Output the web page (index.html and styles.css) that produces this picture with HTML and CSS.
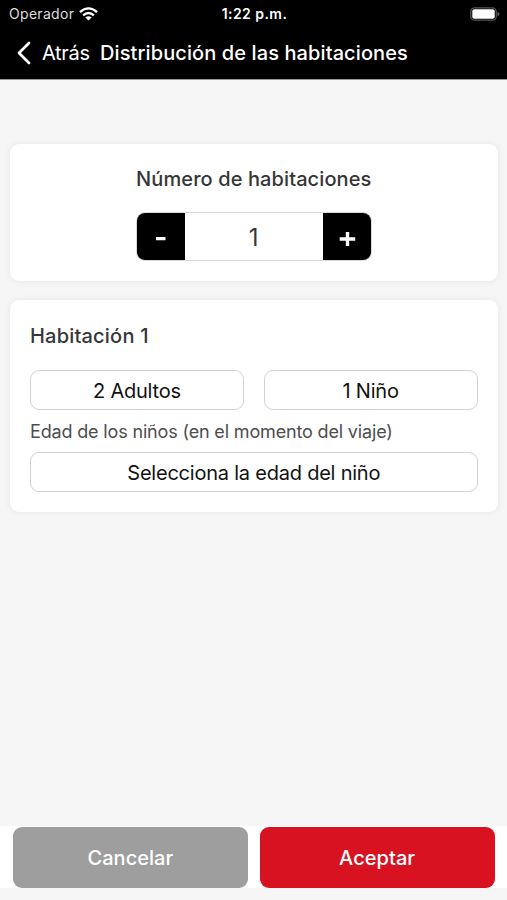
FILE: index.html
```html
<!DOCTYPE html>
<html lang="es">
<head>
<meta charset="utf-8">
<meta name="viewport" content="width=device-width">
<title>Distribución de las habitaciones</title>
<link rel="stylesheet" href="styles.css">
</head>
<body>
<header class="header">
  <div class="status">
    <div class="carrier"><span>Operador</span>
      <svg class="wifi" viewBox="0 0 18 13" width="19" height="14" fill="none" stroke="#fff" stroke-width="2.2"><path d="M.9 4.7Q9-2.4 17.1 4.7M3.9 7.7q5.1-4.3 10.2 0"/><path d="M9 12.7 6 9.8q3-2.5 6 0z" fill="#fff" stroke="none"/></svg>
    </div>
    <span class="time">1:22 p.m.</span>
    <svg class="battery" viewBox="0 0 30 14" width="30" height="14"><rect x=".8" y=".8" width="25.4" height="12.4" rx="3.8" fill="none" stroke="#555" stroke-width="1.3"/><rect x="2.3" y="2.3" width="22.4" height="9.4" rx="2" fill="#fff"/><path d="M27.4 4.8q2.2.5 2.2 2.2t-2.2 2.2z" fill="#555"/></svg>
  </div>
  <nav class="nav">
    <svg class="chevron" viewBox="0 0 14 24" width="14" height="24" fill="none" stroke="#fff" stroke-width="2.8" stroke-linecap="round" stroke-linejoin="round"><path d="M12 2 2 12l10 10"/></svg>
    <a class="back">Atrás</a>
    <h1 class="title">Distribución de las habitaciones</h1>
  </nav>
</header>
<main class="content">
  <section class="card count">
    <h2 class="heading count-heading">Número de habitaciones</h2>
    <div class="stepper">
      <button class="step"><svg width="12" height="20" viewBox="0 0 12 20"><path d="M1 11.6h9.5" stroke="#fff" stroke-width="3.4"/></svg></button>
      <span class="value">1</span>
      <button class="step"><svg width="18" height="20" viewBox="0 0 18 20"><path d="M1.7 12h15.5M9.5 5v14" stroke="#fff" stroke-width="3.4"/></svg></button>
    </div>
  </section>
  <section class="card room">
    <h2 class="heading room-heading">Habitación 1</h2>
    <div class="guests">
      <button class="select"><span class="adults">2 Adultos</span></button>
      <button class="select"><span class="children">1 Niño</span></button>
    </div>
    <p class="label">Edad de los niños (en el momento del viaje)</p>
    <button class="select"><span class="age">Selecciona la edad del niño</span></button>
  </section>
</main>
<footer class="footer">
  <button class="action cancel"><span>Cancelar</span></button>
  <button class="action accept"><span>Aceptar</span></button>
</footer>
</body>
</html>
```

FILE: styles.css
```css
* { box-sizing: border-box; }
body {
  margin: 0;
  height: 900px;
  padding-bottom: 12px;
  display: flex;
  flex-direction: column;
  background: #f6f6f6;
  color: #363638;
  font-family: Inter, "Liberation Sans", sans-serif;
  overflow: hidden;
}
button { font: inherit; border: 0; padding: 0; margin: 0; }
h1, h2, p { margin: 0; }
svg { display: block; }
.header { height: 80px; background: #000; border-bottom: 1px solid #999; color: #fff; }
.status {
  height: 27px;
  padding: 0 7px 0 9px;
  display: grid;
  grid-template-columns: 1fr auto 1fr;
  align-items: center;
  font-size: 14px;
}
.carrier { display: flex; align-items: center; gap: 5px; color: #ddd; letter-spacing: .3px; }
.time { font-weight: 600; letter-spacing: .45px; }
.battery { justify-self: end; }
.nav { height: 51px; display: flex; align-items: center; padding-left: 17px; white-space: nowrap; }
.back { margin-left: 11px; width: 58px; font-size: 20px; letter-spacing: -.3px; }
.title { font-size: 20px; font-weight: 550; letter-spacing: .1px; }
.content { flex: 1; padding: 64px 9.5px 0 10px; }
.card { background: #fff; border-radius: 9px; box-shadow: 0 0 7px rgba(0, 0, 0, .07); }
.count { height: 137px; padding-top: 22px; margin-bottom: 19px; }
.heading { font-size: 20px; line-height: 26px; font-weight: 550; letter-spacing: .1px; white-space: nowrap; }
.count-heading { text-align: center; }
.room-heading { padding-top: 1px; letter-spacing: .2px; }
.stepper {
  width: 236px;
  height: 49px;
  margin: 20px auto 0;
  display: flex;
  border: 1px solid #d9d9d9;
  border-radius: 9px;
  overflow: hidden;
}
.step { width: 48px; background: #000; display: flex; align-items: center; justify-content: center; }
.value { flex: 1; text-align: center; font-size: 24px; line-height: 49px; }
.room { height: 212px; padding: 22px 20px 0; }
.guests { display: grid; grid-template-columns: 1fr 1fr; gap: 20px; margin-top: 21px; }
.select {
  width: 100%;
  height: 40px;
  padding-top: 1px;
  background: #fff;
  border: 1px solid #d2d2d2;
  border-radius: 9px;
  color: #111;
  font-size: 20px;
  letter-spacing: -.22px;
  white-space: nowrap;
}
.label { height: 42px; line-height: 43px; font-size: 18px; letter-spacing: -.16px; color: #4d4d4f; white-space: nowrap; }
.footer { height: 62px; background: #fff; padding: 0 12.5px 0 13px; display: grid; grid-template-columns: 1fr 1fr; gap: 12px; }
.action { height: 61px; margin-top: 1px; border-radius: 9px; color: #fff; font-size: 20px; font-weight: 550; letter-spacing: .05px; }
.cancel { background: #9e9e9e; }
.accept { background: #d91222; }
```
